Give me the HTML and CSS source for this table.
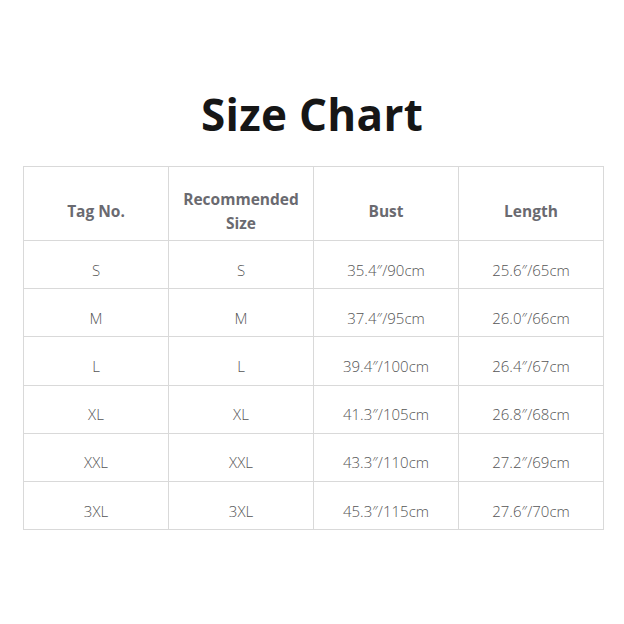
FILE: index.html
```html
<!DOCTYPE html>
<html>
<head>
<meta charset="utf-8">
<link rel="stylesheet" href="styles.css">
</head>
<body>
<div class="page">
  <h1 class="title">Size Chart</h1>
  <table class="chart">
    <thead>
      <tr><th>Tag No.</th><th>Recommended<br>Size</th><th>Bust</th><th>Length</th></tr>
    </thead>
    <tbody>
      <tr><td>S</td><td>S</td><td>35.4″/90cm</td><td>25.6″/65cm</td></tr>
      <tr><td>M</td><td>M</td><td>37.4″/95cm</td><td>26.0″/66cm</td></tr>
      <tr><td>L</td><td>L</td><td>39.4″/100cm</td><td>26.4″/67cm</td></tr>
      <tr><td>XL</td><td>XL</td><td>41.3″/105cm</td><td>26.8″/68cm</td></tr>
      <tr><td>XXL</td><td>XXL</td><td>43.3″/110cm</td><td>27.2″/69cm</td></tr>
      <tr><td>3XL</td><td>3XL</td><td>45.3″/115cm</td><td>27.6″/70cm</td></tr>
    </tbody>
  </table>
</div>
</body>
</html>
```
FILE: styles.css
```css
html, body {
  margin: 0;
  padding: 0;
  background: #ffffff;
}
.page {
  width: 624px;
  height: 624px;
  padding-top: 84px;
  box-sizing: border-box;
  font-family: "Open Sans", "Noto Sans", sans-serif;
}
.title {
  margin: 0 0 22px 0;
  text-align: center;
  font-size: 44px;
  line-height: 60px;
  font-weight: 700;
  color: #161616;
  letter-spacing: 0.3px;
}
.chart {
  margin-left: 23px;
  border-collapse: collapse;
  table-layout: fixed;
  width: 581px;
}
.chart th, .chart td {
  border: 1px solid #d9d9d9;
  width: 145px;
  text-align: center;
  padding: 0;
}
.chart th {
  height: 74px;
  font-size: 15.5px;
  line-height: 24px;
  font-weight: 700;
  color: #6a6a70;
  padding-top: 14px;
  box-sizing: border-box;
}
.chart td {
  height: 48.2px;
  font-size: 15px;
  font-weight: 300;
  color: #555;
  padding-top: 10px;
  box-sizing: border-box;
}
```
